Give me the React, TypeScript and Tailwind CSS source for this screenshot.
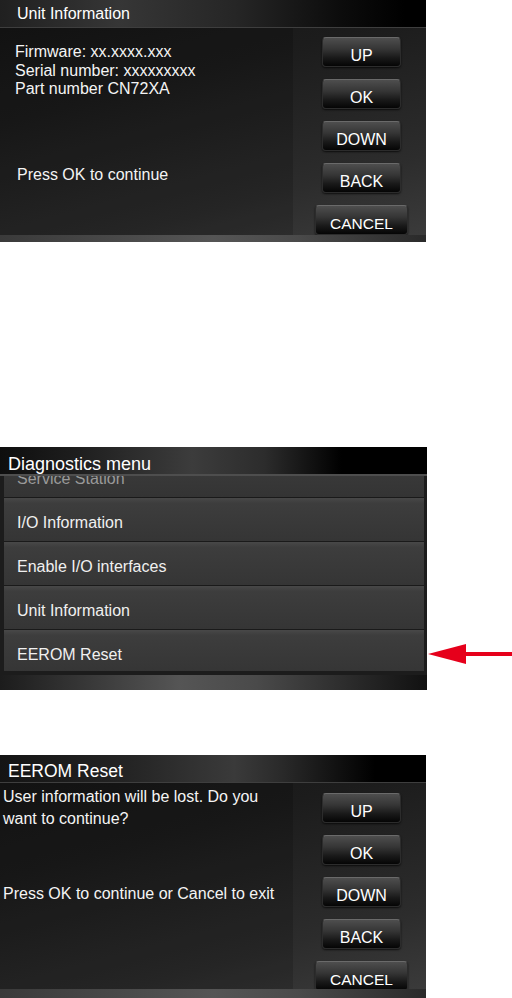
const keys = ['UP', 'OK', 'DOWN', 'BACK']

function KeyButton({ label, wide }: { label: string; wide?: boolean }) {
  return (
    <div
      className={`${wide ? 'w-[93px] text-[15.5px]' : 'w-[79px] text-[16px]'} h-[30px] shrink-0 rounded-[4px] border border-[#2c2c2c] border-t-[#6a6a6a] bg-[linear-gradient(to_bottom,#4e4e4e_0%,#353535_40%,#1a1a1a_70%,#050505_100%)] pt-[9.5px] text-center leading-none text-white shadow-[0_1px_2px_rgba(0,0,0,0.7)]`}
    >
      {label}
    </div>
  )
}

function KeyColumn({ top }: { top: string }) {
  return (
    <div className={`flex flex-1 flex-col items-center gap-[12px] pl-[4px] ${top}`}>
      {keys.map((k) => (
        <KeyButton key={k} label={k} />
      ))}
      <KeyButton label="CANCEL" wide />
    </div>
  )
}

const items = ['I/O Information', 'Enable I/O interfaces', 'Unit Information', 'EEROM Reset']

export default function App() {
  return (
    <div className="min-h-[998px] w-[512px] bg-white font-['Liberation_Sans',Arial,sans-serif]">
      {/* Unit Information screen */}
      <div className="flex h-[242px] w-[426px] flex-col bg-[linear-gradient(165deg,#141414_0%,#1c1c1c_35%,#2c2c2c_75%,#3c3c3c_100%)]">
        <div className="h-[28px] shrink-0 border-b border-[#3e3e3e] bg-[linear-gradient(to_right,#202020_0%,#363636_28%,#262626_55%,#0c0c0c_80%,#000_95%)] pl-[17px] pt-[6px] text-[16px] leading-none text-white">
          Unit Information
        </div>
        <div className="flex h-[207px] shrink-0">
          <div className="w-[293px] bg-black/15 pl-[15px] pt-[15px] text-[16px] leading-[18.5px] text-[#f4f4f4]">
            <p>Firmware: xx.xxxx.xxx</p>
            <p>Serial number: xxxxxxxxx</p>
            <p>Part number CN72XA</p>
            <p className="mt-[67px] pl-[2px]">Press OK to continue</p>
          </div>
          <KeyColumn top="pt-[9px]" />
        </div>
        <div className="flex-1 bg-[linear-gradient(to_right,#3a3a3a_0%,#555_50%,#4a4a4a_70%,#2a2a2a_100%)]" />
      </div>

      {/* Diagnostics menu */}
      <div className="mt-[205px] flex items-start">
        <div className="flex h-[243px] w-[427px] shrink-0 flex-col bg-[#1c1c1c]">
          <div className="h-[29px] shrink-0 border-b-2 border-[#4e4e4e] bg-[linear-gradient(to_right,#0e0e0e_0%,#1e1e1e_18%,#3c3c3c_45%,#2c2c2c_62%,#000_80%)] pl-[8px] pt-[8px] text-[18px] leading-none text-white">
            Diagnostics menu
          </div>
          <div className="h-[199px] shrink-0 overflow-hidden border-b-[4px] border-l-[4px] border-r-[3px] border-[#1c1c1c]">
            <div className="-mt-[23px] h-[44px] bg-[linear-gradient(to_bottom,#474747_0%,#3c3c3c_10%,#343434_100%)] pl-[13px] pt-[18px] text-[16px] leading-none text-[#9a9a9a]">
              Service Station
            </div>
            {items.map((label) => (
              <div
                key={label}
                className="h-[44px] border-t border-[#1a1a1a] bg-[linear-gradient(to_bottom,#484848_0%,#3d3d3d_12%,#353535_100%)] pl-[13px] pt-[17px] text-[16px] leading-none text-[#f0f0f0]"
              >
                {label}
              </div>
            ))}
          </div>
          <div className="flex-1 bg-[linear-gradient(to_right,#1c1c1c_0%,#555_42%,#4a4a4a_60%,#111_100%)]" />
        </div>
        <svg width="84" height="20" viewBox="0 0 84 20" className="ml-[1px] mt-[197px]">
          <polygon points="0,10 38,0 38,20" fill="#e6001b" />
          <rect x="37" y="8" width="47" height="4" fill="#e6001b" />
        </svg>
      </div>

      {/* EEROM Reset screen */}
      <div className="mt-[65px] flex h-[243px] w-[426px] flex-col bg-[linear-gradient(165deg,#141414_0%,#1c1c1c_35%,#2c2c2c_75%,#3c3c3c_100%)]">
        <div className="h-[28px] shrink-0 border-b border-[#3e3e3e] bg-[linear-gradient(to_right,#141414_0%,#242424_30%,#3a3a3a_55%,#2a2a2a_66%,#000_88%)] pl-[8px] pt-[8px] text-[17.5px] leading-none text-white">
          EEROM Reset
        </div>
        <div className="flex h-[206px] shrink-0">
          <div className="w-[293px] bg-black/15 pl-[3px] pt-[3px] text-[16px] leading-[22px] text-[#f4f4f4]">
            <p>
              User information will be lost. Do you
              <br />
              want to continue?
            </p>
            <p className="mt-[53px]">Press OK to continue or Cancel to exit</p>
          </div>
          <KeyColumn top="pt-[10px]" />
        </div>
        <div className="flex-1 bg-[linear-gradient(to_right,#3a3a3a_0%,#555_50%,#4a4a4a_70%,#2a2a2a_100%)]" />
      </div>
    </div>
  )
}
